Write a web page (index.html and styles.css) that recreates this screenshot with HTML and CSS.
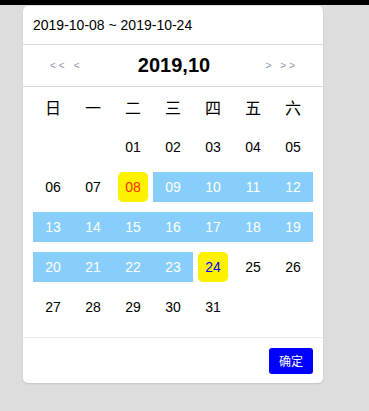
FILE: index.html
```html
<!DOCTYPE html>
<html>
<head>
    <meta charset="UTF-8">
    <meta name="viewport" content="width=device-width, initial-scale=1.0">
    <title>Date Range</title>
    <link rel="stylesheet" href="styles.css">
</head>
<body>
<div class="topbar"></div>

<div class="picker">
    <!-- Selected range -->
    <div class="range-text">2019-10-08 ~ 2019-10-24</div>

    <!-- Month navigation -->
    <div class="nav">
        <span class="arrows"><span>&lt;&lt;</span><span>&lt;</span></span>
        <span class="title">2019,10</span>
        <span class="arrows"><span>&gt;</span><span>&gt;&gt;</span></span>
    </div>

    <div class="grid" id="grid">
        <div class="week">日</div>
        <div class="week">一</div>
        <div class="week">二</div>
        <div class="week">三</div>
        <div class="week">四</div>
        <div class="week">五</div>
        <div class="week">六</div>
    </div>

    <div class="footer">
        <button class="ok">确定</button>
    </div>
</div>

<script>
    // Build the days of October 2019 (starts on Tuesday)
    var grid = document.getElementById('grid');
    var start = 8, end = 24;
    for (let i = 0; i < 2; i++) {
        grid.appendChild(document.createElement('div'));
    }
    for (let d = 1; d <= 31; d++) {
        var cell = document.createElement('div');
        cell.className = 'day';
        var span = document.createElement('span');
        span.textContent = d < 10 ? '0' + d : '' + d;
        if (d === start) span.className = 'start';
        else if (d === end) span.className = 'end';
        else if (d > start && d < end) span.className = 'in-range';
        cell.appendChild(span);
        grid.appendChild(cell);
    }
</script>
</body>
</html>
```

FILE: styles.css
```css
html, body {
    margin: 0;
    height: 100%;
}

body {
    background-color: #dddddd;
    font-family: "Liberation Sans", "Noto Sans CJK SC", sans-serif;
    color: #000;
}

.topbar {
    height: 5px;
    background-color: #000;
}

/* Calendar card */
.picker {
    width: 300px;
    margin: 1px 0 0 23px;
    background-color: #fff;
    border-radius: 5px;
    box-shadow: 0 1px 2px rgba(0, 0, 0, 0.12);
}

.range-text {
    height: 38px;
    line-height: 38px;
    padding-left: 10px;
    font-size: 14px;
    border-bottom: 1px solid #d9d9d9;
}

.nav {
    height: 41px;
    display: flex;
    align-items: center;
    justify-content: space-between;
    padding: 0 25px 0 27px;
    border-bottom: 1px solid #d9d9d9;
}

.arrows {
    display: flex;
    gap: 6px;
    font-size: 10px;
    letter-spacing: 3px;
    color: #8e9aa8;
}

.title {
    font-size: 20px;
    font-weight: bold;
}

/* Days grid */
.grid {
    display: grid;
    grid-template-columns: repeat(7, 40px);
    grid-auto-rows: 40px;
    padding: 0 10px 10px;
}

.week {
    display: flex;
    align-items: center;
    justify-content: center;
    font-family: "Noto Sans CJK SC", sans-serif;
    font-size: 16px;
}

.day {
    display: flex;
    align-items: center;
    justify-content: center;
    font-size: 14px;
}

.day span {
    display: flex;
    align-items: center;
    justify-content: center;
    width: 30px;
    height: 30px;
}

.day span.in-range {
    width: 100%;
    background-color: #87cefa;
    color: #fff;
}

.day span.start,
.day span.end {
    background-color: #fff200;
    border-radius: 5px;
}

.day span.start {
    color: #ff2a00;
}

.day span.end {
    color: #0000ff;
}

/* Footer with confirm button */
.footer {
    display: flex;
    justify-content: flex-end;
    align-items: center;
    height: 45px;
    padding-right: 10px;
    border-top: 1px solid #ececec;
}

.ok {
    width: 44px;
    height: 26px;
    border: none;
    border-radius: 3px;
    background-color: #0000ff;
    color: #fff;
    font-family: "Noto Sans CJK SC", sans-serif;
    font-size: 12px;
    padding: 0;
}
```
